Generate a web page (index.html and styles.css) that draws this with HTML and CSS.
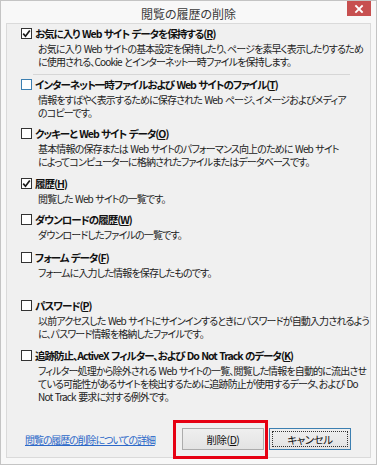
FILE: index.html
```html
<!DOCTYPE html>
<html lang="ja">
<head>
<meta charset="utf-8">
<title>閲覧の履歴の削除</title>
<link rel="stylesheet" href="styles.css">
</head>
<body>
<div class="window">
  <div class="titlebar">
    <div class="title">閲覧の履歴の削除</div>
    <div class="close"><svg width="10" height="10" viewBox="0 0 10 10"><path d="M2 2 L8 8 M8 2 L2 8" stroke="#fff" stroke-width="1.8" stroke-linecap="square"/></svg></div>
  </div>
  <div class="panel">
    <div class="item i1">
      <div class="label"><span class="cb"><svg width="9" height="9" viewBox="0 0 9 9"><path d="M1.2 4.6 L3.5 7.2 L7.8 1.4" fill="none" stroke="#1a1a1a" stroke-width="1.7"/></svg></span><span>お気に入り Web サイト データを保持する(<u>R</u>)</span></div>
      <div class="desc">お気に入り Web サイトの基本設定を保持したり、ページを素早く表示したりするため<br>に使用される、Cookie とインターネット一時ファイルを保持します。</div>
    </div>
    <div class="sep"></div>
    <div class="item i2">
      <div class="label"><span class="cb hot"></span><span>インターネット一時ファイルおよび Web サイトのファイル(<u>T</u>)</span></div>
      <div class="desc">情報をすばやく表示するために保存された Web ページ、イメージおよびメディア<br>のコピーです。</div>
    </div>
    <div class="item i3">
      <div class="label"><span class="cb"></span><span>クッキーと Web サイト データ(<u>O</u>)</span></div>
      <div class="desc">基本情報の保存または Web サイトのパフォーマンス向上のために Web サイト<br>によってコンピューターに格納されたファイルまたはデータベースです。</div>
    </div>
    <div class="item i4">
      <div class="label"><span class="cb"><svg width="9" height="9" viewBox="0 0 9 9"><path d="M1.2 4.6 L3.5 7.2 L7.8 1.4" fill="none" stroke="#1a1a1a" stroke-width="1.7"/></svg></span><span>履歴(<u>H</u>)</span></div>
      <div class="desc">閲覧した Web サイトの一覧です。</div>
    </div>
    <div class="item i5">
      <div class="label"><span class="cb"></span><span>ダウンロードの履歴(<u>W</u>)</span></div>
      <div class="desc">ダウンロードしたファイルの一覧です。</div>
    </div>
    <div class="item i6">
      <div class="label"><span class="cb"></span><span>フォーム データ(<u>F</u>)</span></div>
      <div class="desc">フォームに入力した情報を保存したものです。</div>
    </div>
    <div class="item i7">
      <div class="label"><span class="cb"></span><span>パスワード(<u>P</u>)</span></div>
      <div class="desc">以前アクセスした Web サイトにサインインするときにパスワードが自動入力されるよう<br>に、パスワード情報を格納したファイルです。</div>
    </div>
    <div class="item i8">
      <div class="label"><span class="cb"></span><span>追跡防止、ActiveX フィルター、および Do Not Track のデータ(<u>K</u>)</span></div>
      <div class="desc">フィルター処理から除外される Web サイトの一覧、閲覧した情報を自動的に流出させ<br>ている可能性があるサイトを検出するために追跡防止が使用するデータ、および Do<br>Not Track 要求に対する例外です。</div>
    </div>
    <div class="footer">
      <a class="link" href="#">閲覧の履歴の削除についての詳細</a>
      <div class="buttons">
        <button class="btn">削除(<u>D</u>)</button>
        <button class="btn focused"><span class="focusring">キャンセル</span></button>
      </div>
    </div>
  </div>
  <div class="annot"></div>
</div>
</body>
</html>
```
FILE: styles.css
```css
* { box-sizing: border-box; }
html, body { margin: 0; padding: 0; }
body {
  font-family: "Noto Sans CJK JP", "Noto Sans", sans-serif;
  font-feature-settings: "palt";
  background: #ffffff;
}
.window {
  position: relative;
  width: 377px;
  height: 465px;
  border: 1px solid #c4c4c4;
  background: #f8f8f8;
  display: flex;
  flex-direction: column;
}
.titlebar {
  height: 22px;
  display: grid;
  grid-template-columns: 1fr auto 1fr;
  align-items: start;
}
.title {
  grid-column: 2;
  font-size: 12px;
  line-height: 14px;
  padding-top: 6px;
  color: #3a3a3a;
}
.close {
  grid-column: 3;
  justify-self: end;
  margin-right: 5px;
  width: 24px;
  height: 15px;
  background: #c75050;
  display: flex;
  align-items: center;
  justify-content: center;
}
.close svg { display: block; }
.panel {
  margin: 0 5px;
  height: 435px;
  border: 1px solid #dadada;
  background: #f0f0f0;
  padding: 2px 19px 7px 14px;
  display: flex;
  flex-direction: column;
}
.label {
  display: flex;
  align-items: center;
  gap: 3px;
  height: 14px;
  font-size: 10.5px;
  font-weight: bold;
  letter-spacing: -1px;
  word-spacing: 1px;
  color: #111;
  white-space: nowrap;
}
.cb {
  width: 11px;
  height: 11px;
  flex: none;
  border: 1px solid #333;
  background: #fff;
  display: flex;
  align-items: center;
  justify-content: center;
}
.cb svg { display: block; }
.cb.hot { border-color: #3c7fb1; }
.desc {
  margin-top: 2px;
  padding-left: 17px;
  font-size: 10px;
  line-height: 13px;
  letter-spacing: -0.85px;
  word-spacing: 1px;
  color: #222;
  white-space: nowrap;
}
.sep {
  margin: 6px 0 0 12px;
  width: 317px;
  height: 1px;
  background: #d6d6d6;
}
.i2 { margin-top: 2px; }
.i3 { margin-top: 7px; }
.i4 { margin-top: 8px; }
.i5 { margin-top: 7px; }
.i6 { margin-top: 9px; }
.i7 { margin-top: 19px; }
.i8 { margin-top: 8px; }
.footer {
  margin-top: auto;
  display: flex;
  align-items: center;
}
.link {
  margin-left: 4px;
  font-size: 10px;
  letter-spacing: -1.1px;
  color: #2c68c8;
  text-decoration: underline;
  white-space: nowrap;
}
.buttons {
  margin-left: auto;
  display: flex;
  gap: 5px;
}
.btn {
  width: 82px;
  height: 22px;
  padding: 0;
  font-family: inherit;
  font-feature-settings: "palt";
  font-size: 10.5px;
  letter-spacing: -0.5px;
  color: #111;
  background: linear-gradient(#efefef, #e3e3e3);
  border: 1px solid #acacac;
  display: flex;
  align-items: center;
  justify-content: center;
}
.btn.focused {
  border-color: #3c7fb1;
  padding: 2px;
}
.focusring {
  width: 100%;
  height: 100%;
  border: 1px dotted #333;
  display: flex;
  align-items: center;
  justify-content: center;
}
.annot {
  position: absolute;
  left: 172px;
  top: 419px;
  width: 95px;
  height: 39px;
  border: 3px solid #e60012;
}
```
